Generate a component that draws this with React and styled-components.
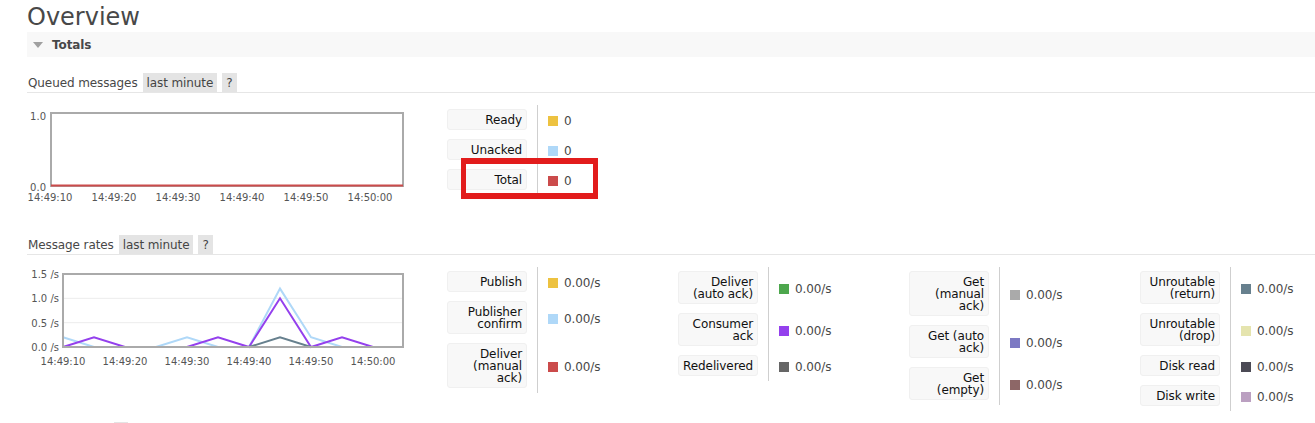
import React from 'react';
import styled, { createGlobalStyle } from 'styled-components';

const GlobalStyle = createGlobalStyle`
  html, body { margin: 0; padding: 0; background: #fff; }
  body {
    font-family: "DejaVu Sans", Verdana, sans-serif;
    font-size: 12px;
    letter-spacing: -0.1px;
    color: #484848;
    overflow: hidden;
  }
`;

const C = {
  yellow: '#edc240',
  lightBlue: '#afd8f8',
  red: '#cb4b4b',
  green: '#4da74d',
  purple: '#9440ed',
  darkGrey: '#666666',
  grey: '#aaaaaa',
  violet: '#7c79c3',
  brown: '#8d6767',
  slate: '#67808e',
  cream: '#e5e4ae',
  charcoal: '#4b4a55',
  lilac: '#bba0c1',
};

const Page = styled.div`
  padding-left: 27px;
  height: 423px;
  overflow: hidden;
`;

const Title = styled.h1`
  margin: 3px 0 0 0;
  font-size: 24px;
  font-weight: normal;
  letter-spacing: 0;
  line-height: 29px;
  color: #484848;
`;

const TotalsBar = styled.div`
  display: flex;
  align-items: center;
  height: 25px;
  background: #f8f8f8;
  padding-left: 6px;
  font-weight: bold;
  color: #484848;
`;

const Triangle = styled.span`
  width: 0;
  height: 0;
  border-left: 5.5px solid transparent;
  border-right: 5.5px solid transparent;
  border-top: 6px solid #a0a0a0;
  margin-right: 9px;
`;

const SectionHeader = styled.div`
  display: flex;
  align-items: flex-start;
  height: 19px;
  line-height: 21px;
  margin-top: ${(p) => p.$gap}px;
  padding-left: 1px;
  border-bottom: 1px solid #e6e6e6;
  color: #484848;
`;

const Badge = styled.span`
  height: 19px;
  overflow: hidden;
  margin-left: 5px;
  padding: 0 4px;
  background: #e4e4e4;
  color: #444;
`;

const ChartRow = styled.div`
  display: flex;
  align-items: flex-start;
  margin-top: 12px;
`;

const ChartBox = styled.div`
  flex: none;
  width: 420px;
  svg { display: block; }
  text {
    font-family: "DejaVu Sans", Verdana, sans-serif;
    font-size: 10px;
    letter-spacing: 0;
    fill: #555;
  }
`;

const Legend = styled.div`
  position: relative;
  flex: none;
  width: 231px;
  display: grid;
  grid-template-columns: 90px 1fr;
  align-content: start;
`;

const LabelCell = styled.div`
  padding: 4px 10px 5px 0;
`;

const LabelBox = styled.div`
  background: #f8f8f8;
  border: 1px solid #f0f0f0;
  border-radius: 3px;
  padding: 4px 4px 3px;
  line-height: 12px;
  text-align: right;
  color: #111;
`;

const ValueCell = styled.div`
  display: flex;
  align-items: center;
  gap: 6px;
  padding: 2px 0 0 10px;
  border-left: 1px solid #cfcfcf;
  color: #484848;
`;

const Swatch = styled.span`
  width: 10px;
  height: 10px;
  flex: none;
  margin-top: -1px;
  background: ${(p) => p.$color};
`;

const Highlight = styled.div`
  position: absolute;
  left: 14px;
  top: 53px;
  width: 137px;
  height: 41px;
  box-sizing: border-box;
  border-style: solid;
  border-color: #e21c1c;
  border-width: 6px 5px;
  pointer-events: none;
`;

const LegendTable = ({ items, children }) => (
  <Legend>
    {items.map(([label, color, value]) => (
      <React.Fragment key={label}>
        <LabelCell>
          <LabelBox>{label}</LabelBox>
        </LabelCell>
        <ValueCell>
          <Swatch $color={color} />
          {value}
        </ValueCell>
      </React.Fragment>
    ))}
    {children}
  </Legend>
);

const TIMES = ['14:49:10', '14:49:20', '14:49:30', '14:49:40', '14:49:50', '14:50:00'];

const QueuedChart = () => (
  <svg width="400" height="100">
    <text x="19" y="15" textAnchor="end">1.0</text>
    <text x="19" y="86" textAnchor="end">0.0</text>
    {TIMES.map((t, i) => (
      <text key={t} x={23 + i * 64} y="96" textAnchor="middle">{t}</text>
    ))}
    <rect x="24" y="8" width="352" height="73" fill="none" stroke="#aaa" strokeWidth="2" />
    <line x1="24" x2="376" y1="80.5" y2="80.5" stroke={C.red} strokeWidth="2" />
  </svg>
);

const yOf = (v) => 80 - v * 48.67;
const xOf = (i) => 36 + i * 31;
const pts = (vals) => vals.map((v, i) => `${xOf(i)},${yOf(v)}`).join(' ');

const RATE_SERIES = [
  [C.lightBlue, [0.2, 0, 0, 0, 0.2, 0, 0, 1.2, 0.2, 0, 0, 0]],
  [C.purple, [0, 0.2, 0, 0, 0, 0.2, 0, 1.0, 0, 0.2, 0, 0]],
  [C.slate, [0, 0, 0, 0, 0, 0, 0, 0.2, 0, 0, 0, 0]],
];

const RatesChart = () => (
  <svg width="400" height="100">
    {[['1.5 /s', 1.5], ['1.0 /s', 1.0], ['0.5 /s', 0.5], ['0.0 /s', 0]].map(([l, v]) => (
      <text key={l} x="32" y={yOf(v) + 4} textAnchor="end">{l}</text>
    ))}
    {TIMES.map((t, i) => (
      <text key={t} x={36 + i * 62} y="98" textAnchor="middle">{t}</text>
    ))}
    <line x1="36" x2="376" y1={yOf(1)} y2={yOf(1)} stroke="#ececec" strokeWidth="1" />
    <line x1="36" x2="376" y1={yOf(0.5)} y2={yOf(0.5)} stroke="#ececec" strokeWidth="1" />
    {RATE_SERIES.map(([color, vals]) => (
      <polyline key={color} points={pts(vals)} fill="none" stroke={color} strokeWidth="2" strokeLinejoin="miter" />
    ))}
    <rect x="36" y="7" width="340" height="73" fill="none" stroke="#aaa" strokeWidth="2" />
  </svg>
);

const QUEUED = [
  ['Ready', C.yellow, '0'],
  ['Unacked', C.lightBlue, '0'],
  ['Total', C.red, '0'],
];

const RATES = [
  [
    ['Publish', C.yellow],
    ['Publisher confirm', C.lightBlue],
    ['Deliver (manual ack)', C.red],
  ],
  [
    ['Deliver (auto ack)', C.green],
    ['Consumer ack', C.purple],
    ['Redelivered', C.darkGrey],
  ],
  [
    ['Get (manual ack)', C.grey],
    ['Get (auto ack)', C.violet],
    ['Get (empty)', C.brown],
  ],
  [
    ['Unroutable (return)', C.slate],
    ['Unroutable (drop)', C.cream],
    ['Disk read', C.charcoal],
    ['Disk write', C.lilac],
  ],
];

export default function App() {
  return (
    <>
      <GlobalStyle />
      <Page>
        <Title>Overview</Title>
        <TotalsBar>
          <Triangle />
          Totals
        </TotalsBar>

        <SectionHeader $gap={16}>
          Queued messages
          <Badge>last minute</Badge>
          <Badge>?</Badge>
        </SectionHeader>
        <ChartRow>
          <ChartBox>
            <QueuedChart />
          </ChartBox>
          <LegendTable items={QUEUED}>
            <Highlight />
          </LegendTable>
        </ChartRow>

        <SectionHeader $gap={30}>
          Message rates
          <Badge>last minute</Badge>
          <Badge>?</Badge>
        </SectionHeader>
        <ChartRow>
          <ChartBox>
            <RatesChart />
          </ChartBox>
          {RATES.map((col, i) => (
            <LegendTable key={i} items={col.map(([l, c]) => [l, c, '0.00/s'])} />
          ))}
        </ChartRow>

        <SectionHeader $gap={11}>
          Global counts
          <Badge>?</Badge>
        </SectionHeader>
      </Page>
    </>
  );
}
